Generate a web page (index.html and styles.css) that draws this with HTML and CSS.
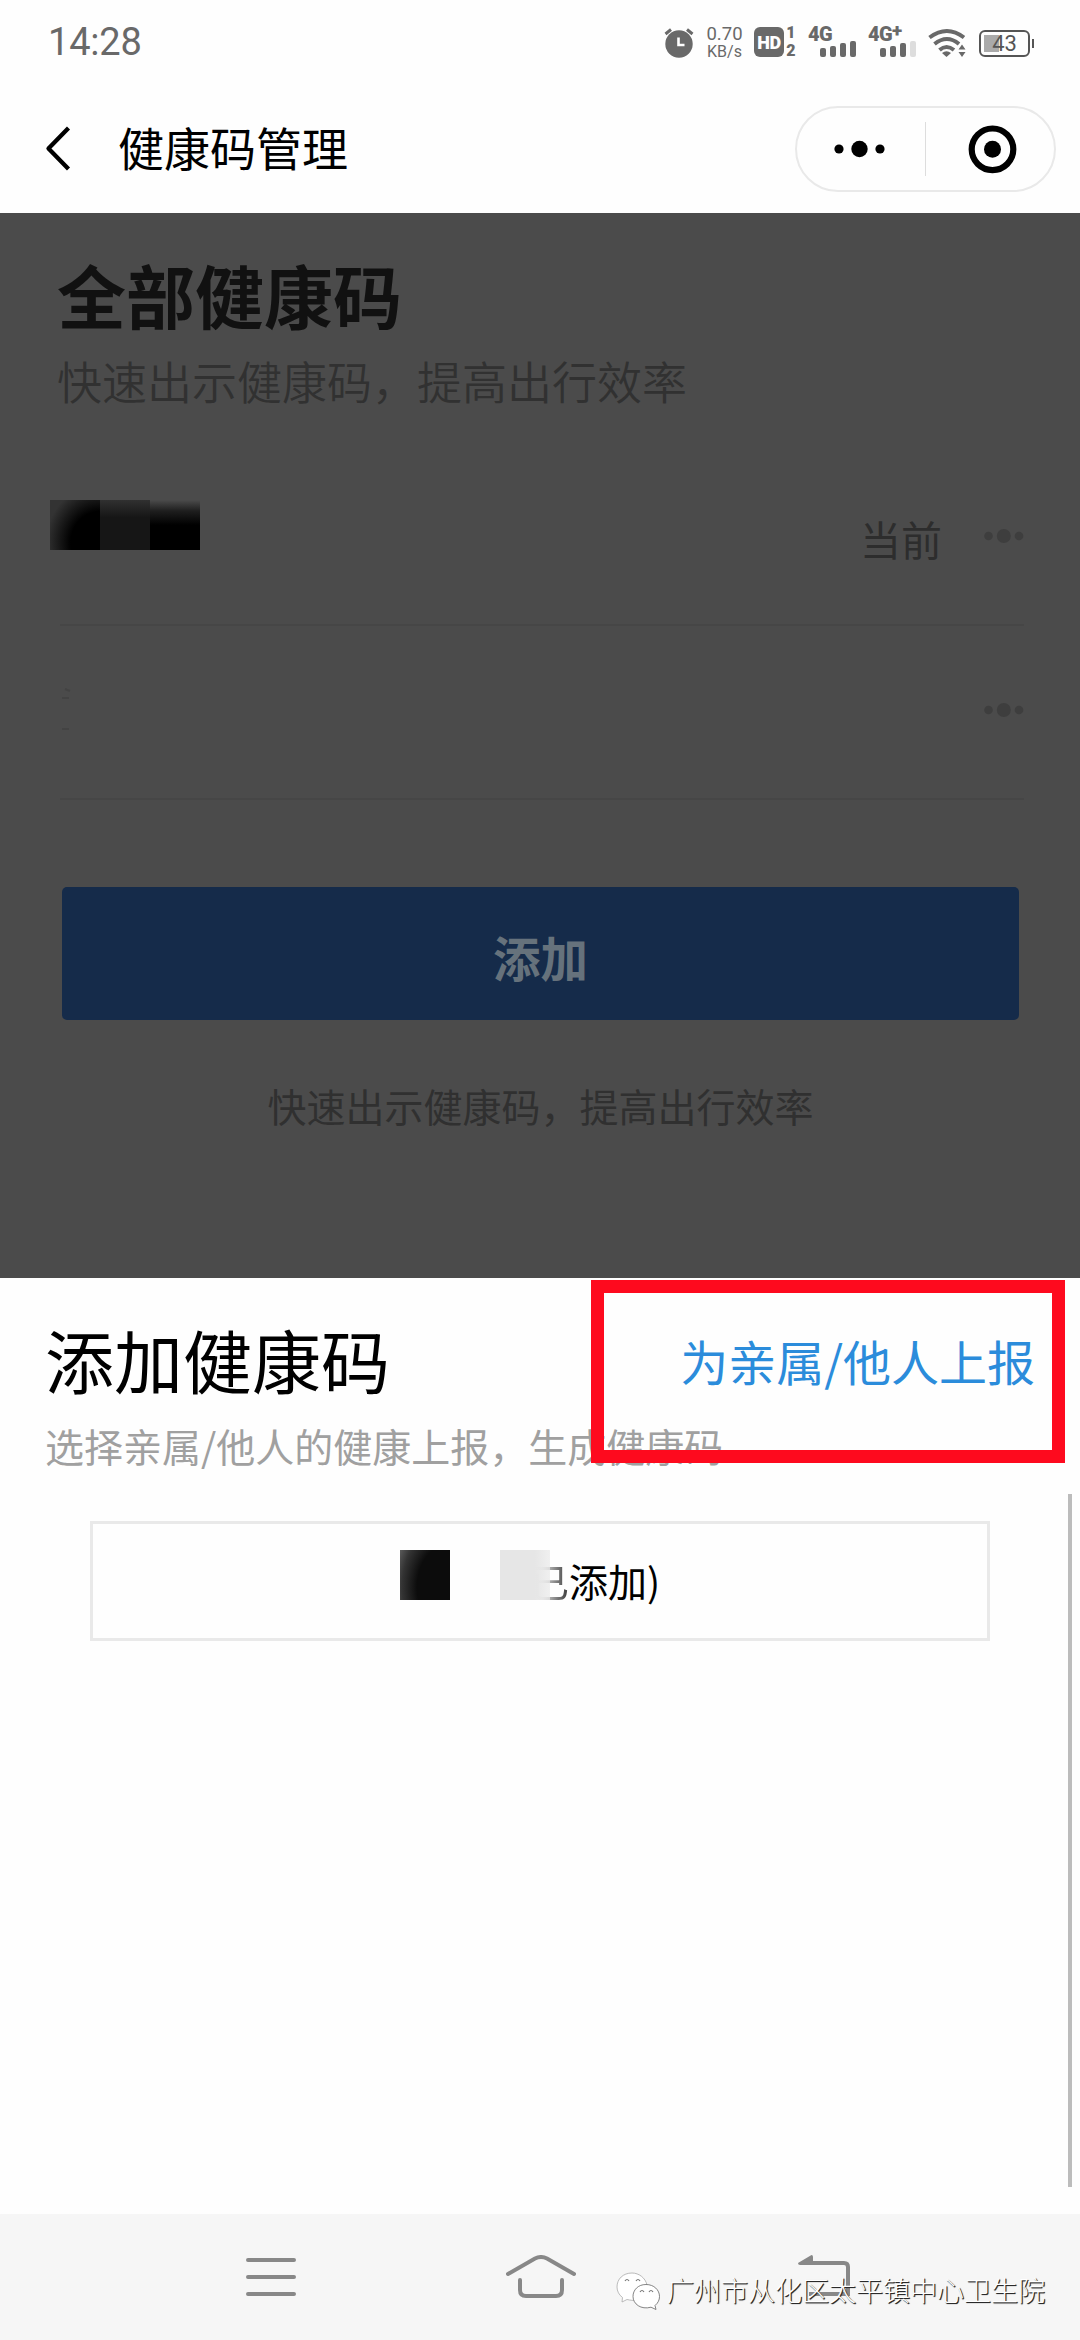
FILE: index.html
```html
<!DOCTYPE html>
<html lang="zh-CN">
<head>
<meta charset="utf-8">
<title>健康码管理</title>
<link rel="stylesheet" href="styles.css">
</head>
<body>
<div class="screen">
  <header class="statusbar">
    <span class="clock">14:28</span>
    <div class="indicators">
      <svg class="alarm" width="32" height="32" viewBox="0 0 32 32">
        <circle cx="16" cy="17" r="13.700" fill="#696969"/>
        <path d="M2.500 7 L8 2.500 M29.500 7 L24 2.500" stroke="#696969" stroke-width="3" fill="none"/>
        <path d="M15.500 10.500 V18 H21.500" stroke="#fff" stroke-width="2.600" fill="none"/>
      </svg>
      <div class="speed"><span class="rate">0.70</span><span class="unit">KB/s</span></div>
      <div class="hd"><span class="hd-box">HD</span><div class="sims"><span>1</span><span>2</span></div></div>
      <div class="signal">
        <span class="net">4G</span>
        <div class="bars"><i class="b1"></i><i class="b2"></i><i class="b3"></i><i class="b4"></i></div>
      </div>
      <div class="signal second">
        <span class="net">4G<b>+</b></span>
        <div class="bars"><i class="b1"></i><i class="b2"></i><i class="b3"></i><i class="b4 off"></i></div>
      </div>
      <svg class="wifi" width="38" height="30" viewBox="0 0 38 30">
        <g fill="none" stroke="#696969" stroke-width="4">
          <path d="M1.500 9.500 Q19 -3.500 36 9.500"/>
          <path d="M6.500 16 Q19 6 31 16"/>
          <path d="M11.500 22 Q18.500 16 26 22"/>
        </g>
        <path d="M14 25 Q18.500 21.500 23 25 L18.500 29 Z" fill="#696969"/>
        <path d="M30.500 21.500 L34 16.500 L37.500 21.500 Z M30.500 24 L34 29 L37.500 24 Z" fill="#696969"/>
      </svg>
      <div class="battery"><span>43</span></div>
    </div>
  </header>

  <nav class="titlebar">
    <svg class="back" width="28" height="50" viewBox="0 0 28 50">
      <path d="M23.500 4 L3.500 24.500 L23.500 45" fill="none" stroke="#000" stroke-width="4.300" stroke-linejoin="round"/>
    </svg>
    <h1 class="title">健康码管理</h1>
    <div class="capsule">
      <svg class="more" width="128" height="82" viewBox="0 0 128 82">
        <circle cx="42" cy="41" r="4.600"/><circle cx="62.500" cy="41" r="8.200"/><circle cx="83" cy="41" r="4.600"/>
      </svg>
      <span class="split"></span>
      <svg width="126" height="82" viewBox="0 0 126 82">
        <circle cx="66.500" cy="41.300" r="20.800" fill="none" stroke="#000" stroke-width="6.200"/>
        <circle cx="66.500" cy="41.300" r="8.500"/>
      </svg>
    </div>
  </nav>

  <main class="page">
    <h2 class="heading">全部健康码</h2>
    <p class="sub">快速出示健康码，提高出行效率</p>
    <div class="row">
      <div class="mask"><i class="m1"></i><i class="m2"></i><i class="m3"></i></div>
      <span class="current">当前</span>
      <svg class="dots" width="40" height="16" viewBox="0 0 40 16"><circle cx="4.500" cy="8" r="4.300"/><circle cx="19.800" cy="8" r="7"/><circle cx="35" cy="8" r="4.300"/></svg>
    </div>
    <div class="row">
      <svg class="trace" width="14" height="48" viewBox="0 0 14 48"><path d="M4 3 L9 5 M1 12 H8 M1 43 H8" stroke="#434343" stroke-width="2"/></svg>
      <svg class="dots" width="40" height="16" viewBox="0 0 40 16"><circle cx="4.500" cy="8" r="4.300"/><circle cx="19.800" cy="8" r="7"/><circle cx="35" cy="8" r="4.300"/></svg>
    </div>
    <div class="add">添加</div>
    <p class="note">快速出示健康码，提高出行效率</p>
  </main>

  <section class="sheet">
    <div class="sheet-head">
      <h2>添加健康码</h2>
      <a class="report">为亲属/他人上报</a>
    </div>
    <p class="hint">选择亲属/他人的健康上报，生成健康码</p>
    <div class="person">
      <i class="ink"></i>
      <span class="added"><span class="fade">已</span>添加)</span>
      <i class="patch"></i>
    </div>
    <div class="marker"></div>
    <div class="scroll"></div>
  </section>

  <footer class="navbar">
    <svg width="50" height="44" viewBox="0 0 50 44"><path d="M2 5 H48 M2 22 H48 M2 39 H48" stroke="#888" stroke-width="4" stroke-linecap="round"/></svg>
    <svg width="70" height="44" viewBox="0 0 70 44"><g fill="none" stroke="#888" stroke-width="4" stroke-linecap="round"><path d="M2 19 L29 3.500 Q35 .500 41 3.500 L68 19"/><path d="M14 25 V35 Q14 41 20 41 H50 Q56 41 56 35 V25"/></g></svg>
    <svg width="54" height="44" viewBox="0 0 54 44"><path d="M14 8 H46 Q50 8 50 12 V39 H11" fill="none" stroke="#888" stroke-width="4"/><path d="M0 8 L13.500 0 Q15 0 15 2 V10 H2 Q0 10 0 8 Z" fill="#888"/></svg>
    <div class="watermark">
      <svg width="46" height="40" viewBox="0 0 46 40">
        <g fill="#fff" stroke="#aaa" stroke-width=".8">
          <path d="M17 2 C8 2 2 8 2 16 C2 20 4 24 7.500 26.500 L7 31 L12 28.500 C26 32 33 24 32 14 C30.500 7 24 2 17 2 Z"/>
          <path d="M31 13.500 C23 13.500 18 19 18 25.500 C18 33 26 39 36 36.200 L41 38.500 L40 34.500 C43 32 44.500 29 44.500 25.500 C44.500 19 39 13.500 31 13.500 Z" stroke="#666"/>
        </g>
        <path d="M10 10 Q12 7 14 10 M21 10 Q23 7 25 10 M25 21 Q27 18 29 21 M34 21 Q36 18 38 21" fill="none" stroke="#777" stroke-width="1.200"/>
      </svg>
      <span>广州市从化区太平镇中心卫生院</span>
    </div>
  </footer>
</div>
</body>
</html>
```
FILE: styles.css
```css
* { box-sizing: border-box; margin: 0; padding: 0; }
body { background: #fefefe; font-family: "Noto Sans CJK SC", sans-serif; color: #000; }
h1, h2 { font-weight: 400; }
svg, i { display: block; flex: none; }
.screen { width: 1080px; height: 2340px; display: flex; flex-direction: column; overflow: hidden; }

.statusbar { height: 86px; flex: none; display: flex; justify-content: space-between; padding: 0 47px 0 48px; color: #696969; font-family: Roboto, sans-serif; }
.clock { font-size: 38px; line-height: 44px; padding-top: 20px; letter-spacing: -.2px; }
.indicators { display: flex; align-items: flex-start; padding-top: 27px; }
.speed { width: 37px; margin-left: 11px; display: flex; flex-direction: column; align-items: center; }
.rate { font-size: 18.5px; line-height: 14px; }
.unit { font-size: 16px; line-height: 13px; margin-top: 4px; }
.hd { display: flex; margin-left: 11px; }
.hd-box { width: 30px; height: 30px; border-radius: 6px; background: #696969; color: #fff; font-size: 18px; font-weight: 900; line-height: 31px; text-align: center; letter-spacing: -.5px; }
.sims { display: flex; flex-direction: column; align-items: center; width: 12px; margin-left: 1px; font-size: 16px; font-weight: 900; }
.sims span { line-height: 12px; }
.sims span + span { margin-top: 6px; }
.signal { width: 48px; height: 30px; margin-left: 11px; }
.signal.second { margin-left: 12px; }
.net { display: flex; font-size: 20px; font-weight: 900; line-height: 15px; height: 14px; letter-spacing: -.6px; }
.net b { line-height: 8px; font-size: 19px; }
.bars { display: flex; align-items: flex-end; gap: 4px; height: 16px; padding-left: 12px; }
.bars i { width: 6px; border-radius: 2px; background: #696969; }
.b1 { height: 9px; }
.b2 { height: 11px; }
.b3 { height: 14px; }
.b4 { height: 16px; }
.bars .off { background: #ddd; }
.wifi { margin: 1px 0 0 12px; }
.battery { width: 51px; height: 27px; margin: 3px 3px 0 13px; border: 2.5px solid #555; border-radius: 6px; background: linear-gradient(#aaa, #aaa) 3px 3px / 15px 17px no-repeat; position: relative; text-align: center; font-size: 22px; line-height: 24px; color: #555; }
.battery::after { content: ""; position: absolute; right: -6px; top: 7px; width: 2px; height: 9px; background: #555; }

.titlebar { height: 127px; flex: none; display: flex; align-items: flex-start; padding: 20px 24px 0 45px; }
.back { margin-top: 18px; }
.title { margin-left: 45px; font-size: 46px; line-height: 60px; padding-top: 10px; flex: 1; }
.capsule { width: 261px; height: 86px; border: 2px solid #e9e9e9; border-radius: 43px; display: flex; align-items: center; }
.split { width: 1px; height: 54px; background: #ddd; }

.page { height: 1065px; flex: none; background: #4b4b4b; padding: 41px 56px 0 57px; }
.heading { font-size: 69px; line-height: 80px; font-weight: 700; color: #111; }
.sub { font-size: 45px; line-height: 60px; margin: 17px 0 41px; font-weight: 350; color: #313131; }
.row { height: 174px; margin-left: 3px; border-bottom: 2px solid #464646; display: flex; align-items: center; padding-bottom: 4px; }
.mask { width: 150px; height: 50px; margin: 0 0 23px -10px; display: flex; }
.mask i { width: 50px; height: 50px; }
.m1 { background: radial-gradient(ellipse 45px 48px at 100% 85%, #000 65%, #333 120%); }
.m2 { background: linear-gradient(#303030, #161616 35%); }
.m3 { background: linear-gradient(#4b4b4b, #1e1e1e 22%, #000 50%); }
.current { margin-left: auto; font-size: 41px; line-height: 60px; padding-top: 3px; color: #2d2d2d; }
.dots { margin: 0 0 0 42px; fill: #3e3e3e; }
.trace { margin: 0 auto 0 1px; }
.add { width: 957px; height: 133px; margin: 87px 0 0 5px; border-radius: 5px; background: #152b4a; color: #66727c; font-size: 47.5px; font-weight: 700; line-height: 139px; text-align: center; }
.note { margin: 60px 0 0 0; font-size: 39px; line-height: 50px; color: #303030; text-align: center; }

.sheet { height: 936px; flex: none; position: relative; padding: 40px 45px 0 45px; }
.sheet-head { display: flex; justify-content: space-between; align-items: center; height: 84px; }
.sheet-head h2 { font-size: 69px; line-height: 82px; padding-bottom: 2px; }
.report { font-size: 48px; line-height: 78px; color: #2b8cdb; }
.hint { font-size: 39px; line-height: 50px; margin-top: 18px; color: #a0a0a0; }
.person { width: 900px; height: 120px; margin: 51px 0 0 45px; border: 3px solid #e9e9e9; display: flex; align-items: flex-start; padding: 26px 0 0 307px; position: relative; }
.ink { width: 50px; height: 50px; background: radial-gradient(ellipse 60px 80px at 100% 75%, #0c0c0c 55%, #333 80%, #999 120%); }
.added { margin-left: 80px; font-size: 39px; line-height: 60px; white-space: nowrap; }
.fade { background: linear-gradient(90deg, #ddd 30%, #333 100%); -webkit-background-clip: text; background-clip: text; color: transparent; }
.patch { position: absolute; left: 407px; top: 26px; width: 50px; height: 50px; background: linear-gradient(90deg, #e6e6e6 70%, rgba(235,235,235,.75)); }
.marker { position: absolute; left: 591px; top: 2px; width: 474px; height: 183px; border: 13px solid #fe0a1e; }
.scroll { position: absolute; left: 1068px; top: 216px; width: 4px; height: 693px; background: #bcbcbc; }

.navbar { flex: 1; background: #f6f6f6; display: flex; align-items: flex-start; padding: 41px 0 0 246px; position: relative; }
.navbar > svg + svg { margin-left: 210px; }
.navbar > svg:nth-of-type(3) { margin-left: 222px; }
.watermark { position: absolute; left: 615px; top: 57px; display: flex; align-items: center; }
.watermark span { margin: -3px 0 0 6px; font-size: 27px; line-height: 38px; font-weight: 300; color: #fff; white-space: nowrap; text-shadow: 1px 1px 1px #222, 1px 1px 0 #555; }
```
